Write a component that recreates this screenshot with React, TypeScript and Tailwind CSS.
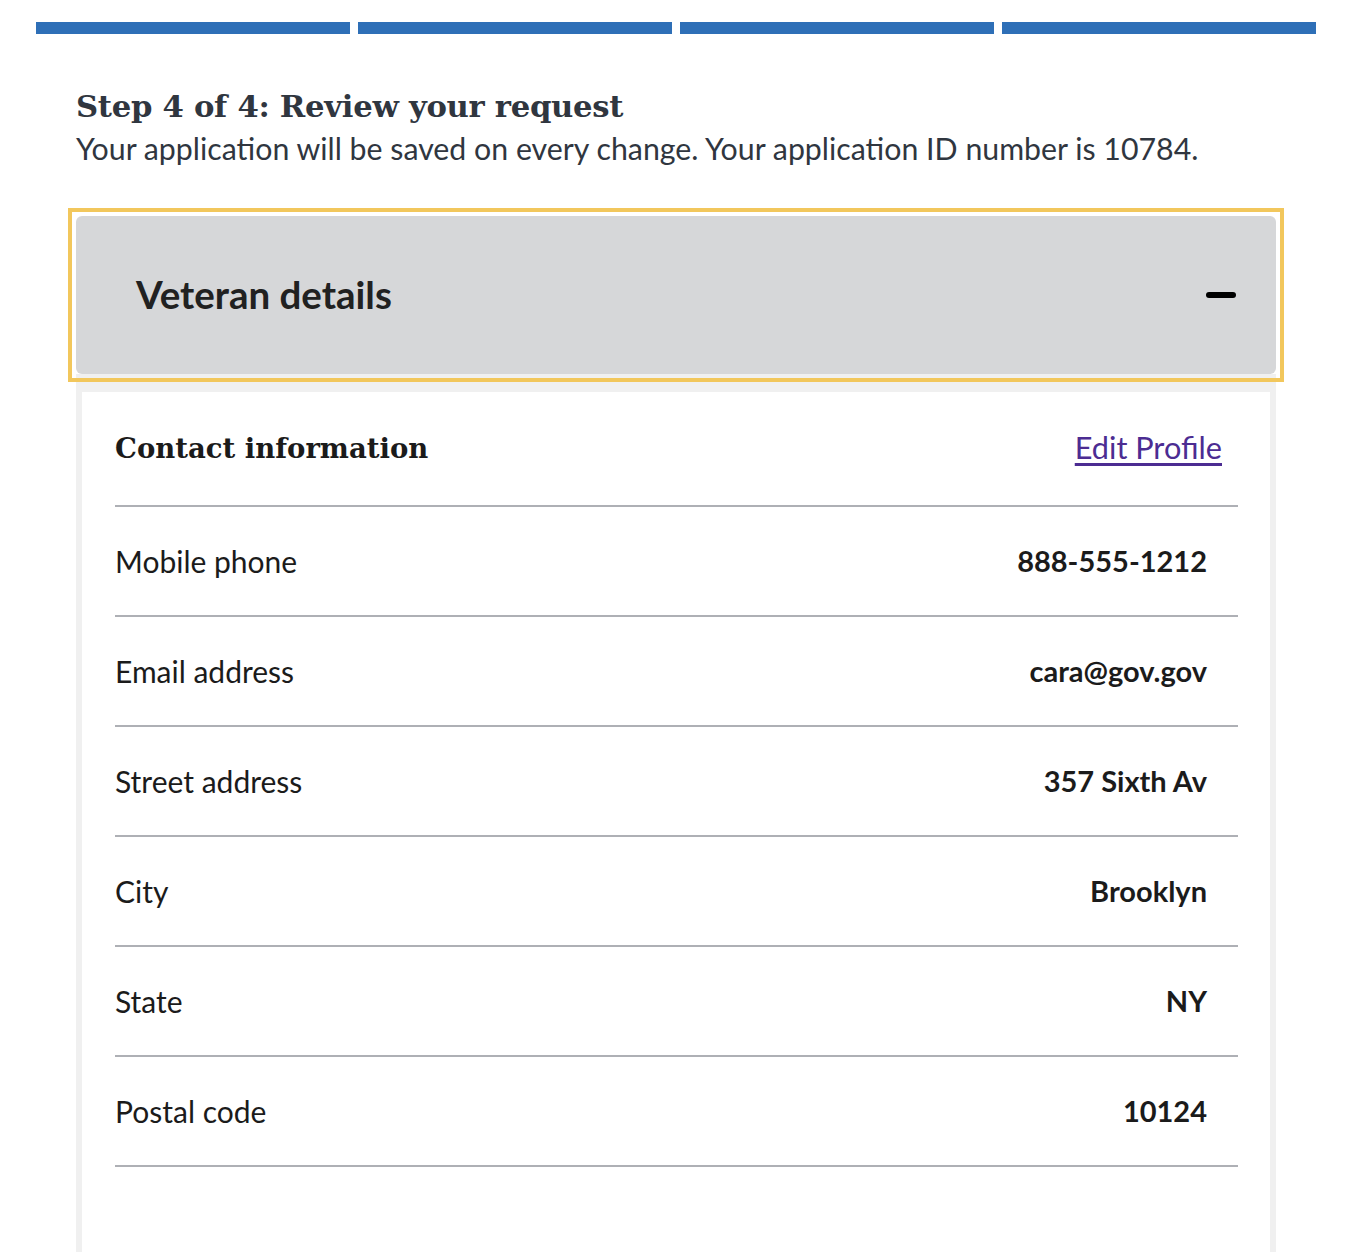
const rows = [
  { label: "Mobile phone", value: "888-555-1212" },
  { label: "Email address", value: "cara@gov.gov" },
  { label: "Street address", value: "357 Sixth Av" },
  { label: "City", value: "Brooklyn" },
  { label: "State", value: "NY" },
  { label: "Postal code", value: "10124" },
];

const sans = "font-['Lato','Noto_Sans',sans-serif]";
const serif = "font-['DejaVu_Serif','Liberation_Serif',serif]";

export default function App() {
  return (
    <div className="min-h-[1252px] bg-white">
      <div className="ml-[36px] w-[1280px]">
        {/* step indicator */}
        <div className="flex gap-2 pt-[22px]">
          {[0, 1, 2, 3].map((i) => (
            <div key={i} className="h-3 flex-1 bg-[#2e6fb7]" />
          ))}
        </div>

        <div className="px-10">
          <h2 className={`${serif} mt-[52px] text-[30.7px] font-bold leading-[40px] tracking-[-0.3px] text-[#30363f]`}>
            Step 4 of 4: Review your request
          </h2>
          <p className={`${sans} mt-[2px] text-[30.3px] leading-[40px] text-[#30363f]`}>
            Your application will be saved on every change. Your application ID number is 10784.
          </p>

          {/* accordion */}
          <div className="mt-[48px]">
            <div className="outline-4 outline-offset-4 outline-[#f2c75c]">
              <button className="flex h-[158px] w-full items-center justify-between rounded-md bg-[#d6d7d9] pl-[60px] pr-[40px]">
                <span className={`${sans} text-[38.5px] font-bold text-[#212121]`}>Veteran details</span>
                <span className="h-[6px] w-[30px] rounded-sm bg-black" />
              </button>
            </div>

            <div className="border-x-[6px] border-t-[18px] border-[#f0f0f0] bg-white pb-[87px] pl-[33px] pr-[32px]">
              <div className="flex h-[115px] items-center justify-between border-b-2 border-[#aeb0b5]">
                <h3 className={`${serif} text-[27.5px] font-bold text-[#1b1b1b]`}>Contact information</h3>
                <a href="#" className={`${sans} mr-4 text-[30.7px] text-[#4c2c92] underline underline-offset-4`}>
                  Edit Profile
                </a>
              </div>
              {rows.map((r) => (
                <div
                  key={r.label}
                  className={`${sans} flex h-[110px] items-center justify-between border-b-2 border-[#aeb0b5] pr-[31px] text-[#1b1b1b]`}
                >
                  <span className="text-[30px]">{r.label}</span>
                  <span className="text-[29px] font-bold">{r.value}</span>
                </div>
              ))}
            </div>
          </div>
        </div>
      </div>
    </div>
  );
}
